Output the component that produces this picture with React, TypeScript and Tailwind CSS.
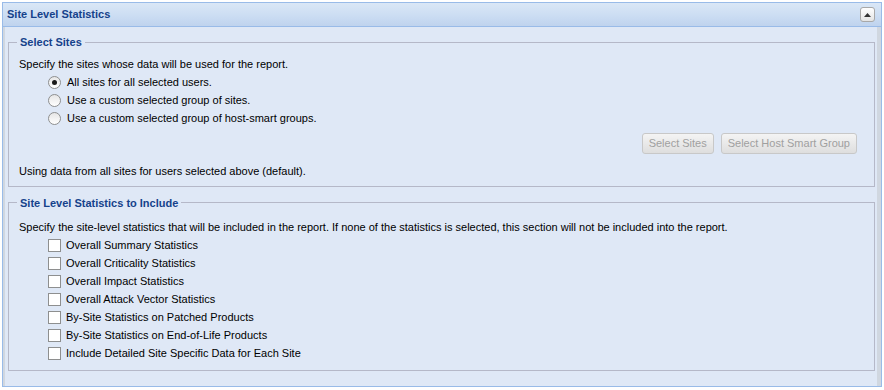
import React from "react";

const font = { fontFamily: '"Liberation Sans", Arial, sans-serif' };

const stats = [
  "Overall Summary Statistics",
  "Overall Criticality Statistics",
  "Overall Impact Statistics",
  "Overall Attack Vector Statistics",
  "By-Site Statistics on Patched Products",
  "By-Site Statistics on End-of-Life Products",
  "Include Detailed Site Specific Data for Each Site",
];

const radios = [
  "All sites for all selected users.",
  "Use a custom selected group of sites.",
  "Use a custom selected group of host-smart groups.",
];

function Radio({ checked }: { checked?: boolean }) {
  return (
    <span className="w-[13px] h-[13px] rounded-full border border-[#8e8f8f] bg-gradient-to-b from-[#e6e6e6] to-white flex items-center justify-center shrink-0">
      {checked && <span className="w-[5px] h-[5px] rounded-full bg-[#1a1a1a]" />}
    </span>
  );
}

function Checkbox() {
  return <span className="w-[13px] h-[13px] border border-[#8e8f8f] bg-white shrink-0" />;
}

function Fieldset({ legend, children, pb }: { legend: string; children: React.ReactNode; pb: string }) {
  return (
    <fieldset className={`border border-[#b5b8c8] ml-[3px] mr-[2px] px-[10px] pt-[4px] ${pb}`}>
      <legend className="px-[3px] -ml-[2px] text-[11px] font-bold text-[#15428b]">{legend}</legend>
      {children}
    </fieldset>
  );
}

export default function App() {
  return (
    <div className="w-[884px] h-[390px] bg-white pt-[2px] px-[2px]" style={font}>
      <div className="border border-[#99bbe8] w-[880px] h-[385px] flex flex-col text-[11px] text-black">
        {/* Header */}
        <div className="h-[24px] flex items-center justify-between pl-[4px] pr-[6px] border-b border-[#99bbe8] bg-gradient-to-b from-[#dae7f6] via-[#cddef3] to-[#bfd3ee]">
          <span className="font-bold text-[11px] text-[#15428b]">Site Level Statistics</span>
          <span className="w-[15px] h-[15px] rounded-[3px] border border-[#a8a8a8] bg-gradient-to-b from-white to-[#e4e4e4] flex items-center justify-center">
            <svg width="7" height="4" viewBox="0 0 7 4">
              <polygon points="0,4 7,4 3.5,0" fill="#333" />
            </svg>
          </span>
        </div>

        {/* Body */}
        <div className="flex-1 flex bg-[#dfe8f6]">
          <div className="w-[2px] bg-[#d0d7e0]" />
          <div className="flex-1 pt-[7px] flex flex-col gap-[8px]">
            <Fieldset legend="Select Sites" pb="pb-[6px]">
              <p className="mt-[1px] mb-[1px]">Specify the sites whose data will be used for the report.</p>
              <div className="flex flex-col pl-[29px]">
                {radios.map((r, i) => (
                  <label key={r} className="h-[18px] flex items-center gap-[6px]">
                    <Radio checked={i === 0} />
                    <span>{r}</span>
                  </label>
                ))}
              </div>
              <div className="flex justify-end gap-[7px] mt-[6px] pr-[7px]">
                <button className="h-[21px] px-[6px] rounded-[3px] border border-[#c8c8c8] bg-gradient-to-b from-[#f4f4f4] to-[#dedede] text-[11px] text-[#a0a0a0]">
                  Select Sites
                </button>
                <button className="h-[21px] px-[6px] rounded-[3px] border border-[#c8c8c8] bg-gradient-to-b from-[#f4f4f4] to-[#dedede] text-[11px] text-[#a0a0a0]">
                  Select Host Smart Group
                </button>
              </div>
              <p className="mt-[9px]">Using data from all sites for users selected above (default).</p>
            </Fieldset>
            <Fieldset legend="Site Level Statistics to Include" pb="pb-[7px]">
              <p className="mt-[4px] mb-[1px]">
                Specify the site-level statistics that will be included in the report. If none of the statistics is selected, this section will not be included into the report.
              </p>
              <div className="flex flex-col pl-[29px]">
                {stats.map((s) => (
                  <label key={s} className="h-[18px] flex items-center gap-[5px]">
                    <Checkbox />
                    <span>{s}</span>
                  </label>
                ))}
              </div>
            </Fieldset>
          </div>
          <div className="w-[4px] bg-[#d0d7e0]" />
        </div>
      </div>
    </div>
  );
}
